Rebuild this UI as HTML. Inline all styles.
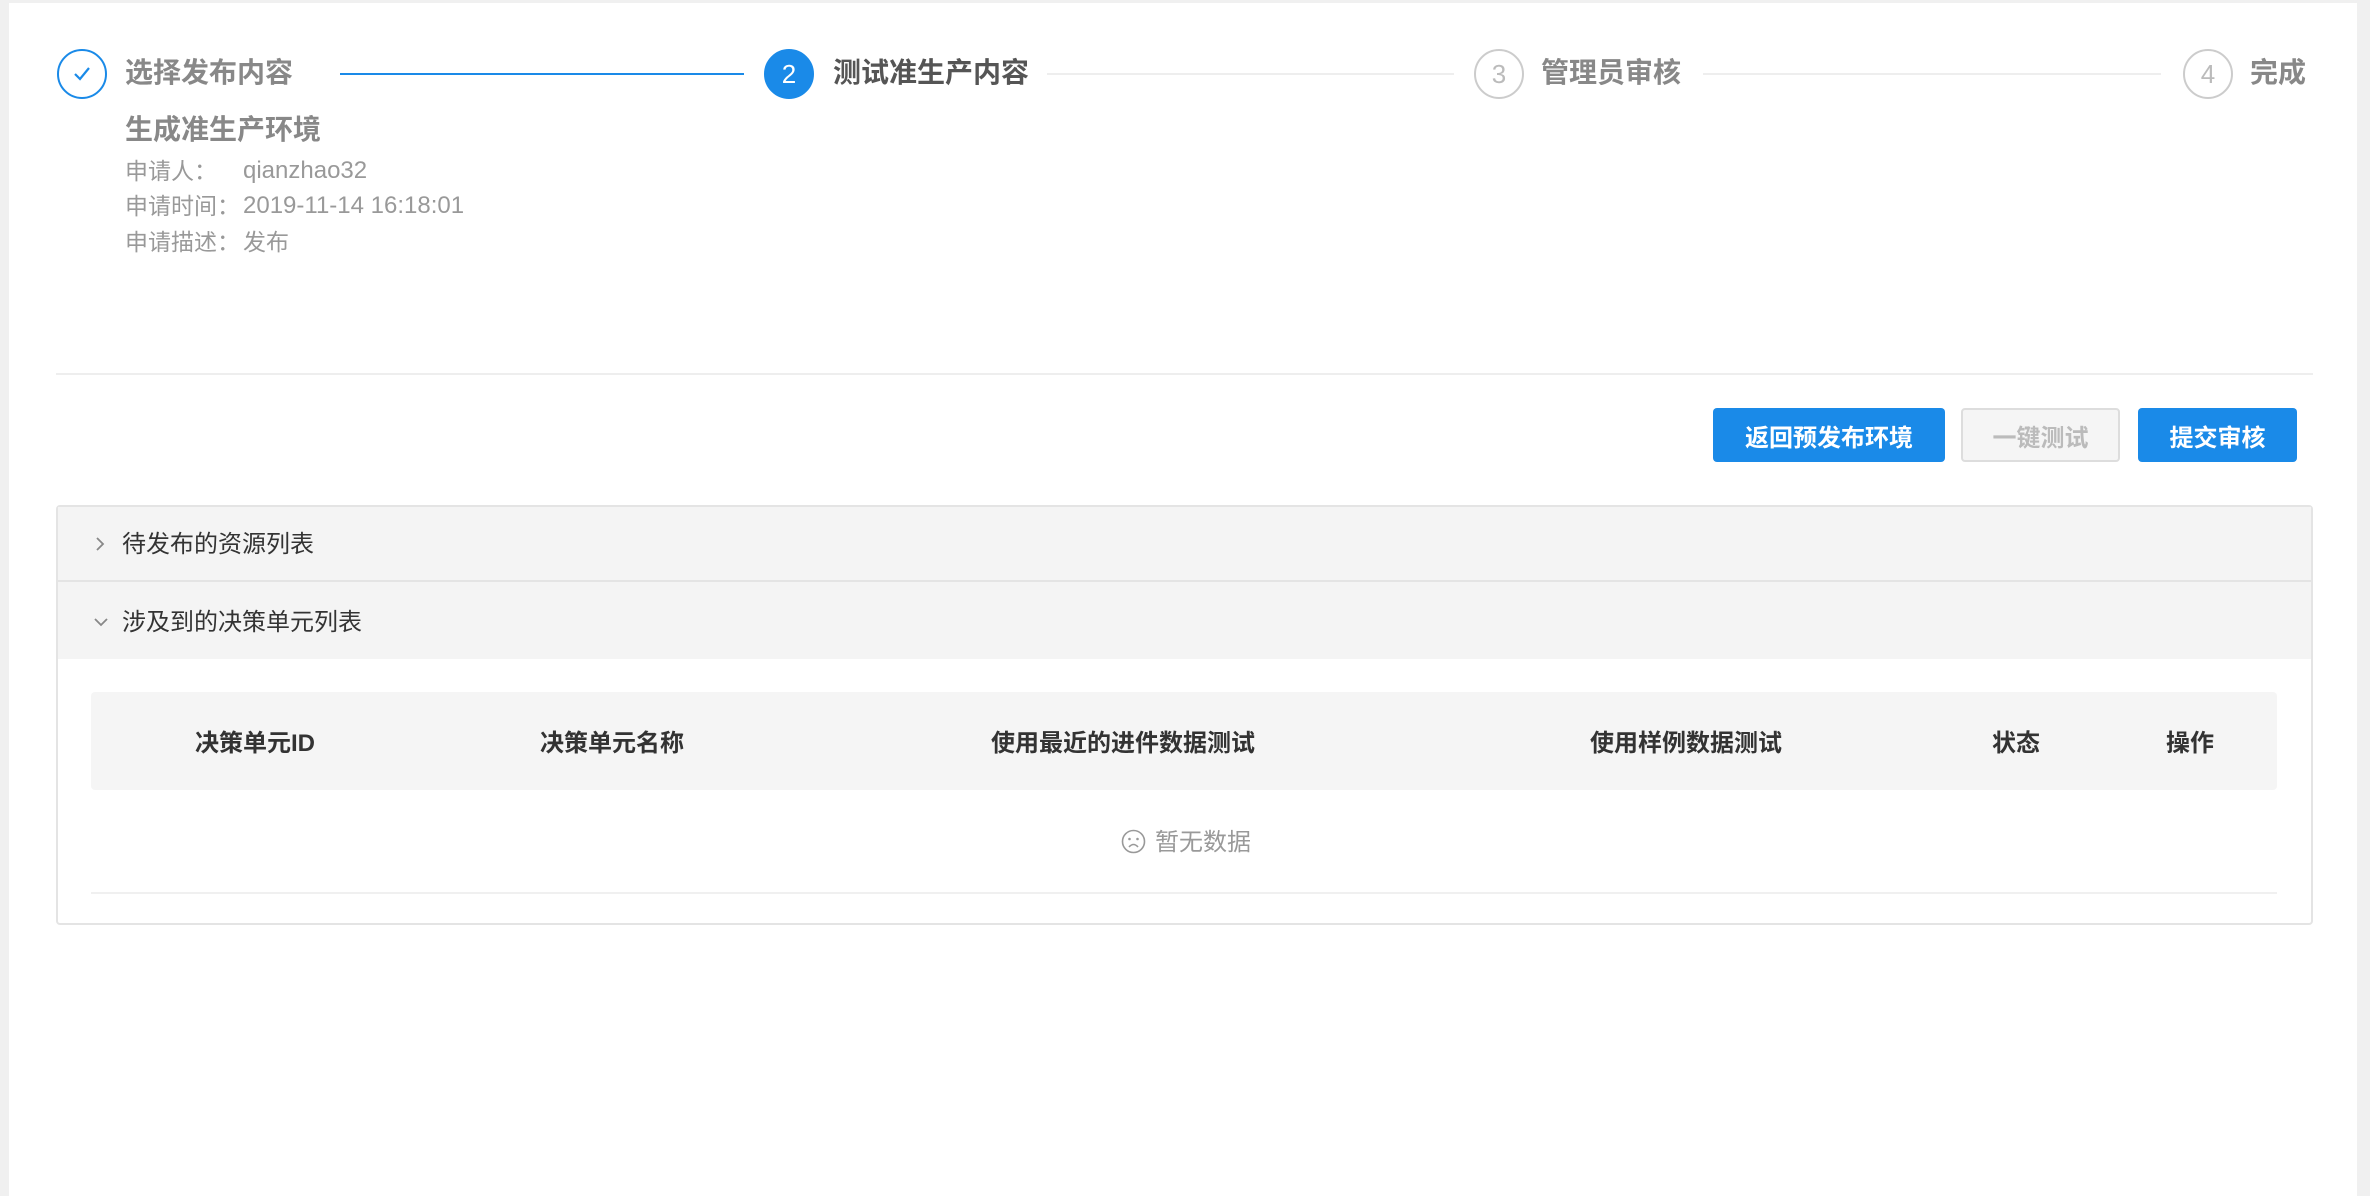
<!DOCTYPE html>
<html><head><meta charset="utf-8"><style>
*{margin:0;padding:0;box-sizing:border-box}
body{width:2370px;height:1196px;background:#f0f0f0;font-family:"Liberation Sans","Noto Sans CJK SC",sans-serif;position:relative;overflow:hidden}
.main{position:absolute;left:9px;top:3px;width:2348px;height:1193px;background:#fff}
.a{position:absolute;white-space:nowrap}
.circ{position:absolute;width:50px;height:50px;border-radius:50%;border:2px solid #ccc;color:#bbb;font-size:26px;display:flex;align-items:center;justify-content:center;top:49px}
.st{position:absolute;top:55px;font-size:28px;font-weight:bold;color:#888;line-height:36px}
.ln{position:absolute;top:73px;height:2px;background:#eee}
.info{position:absolute;left:125px;font-size:23px;color:#999;line-height:30px;white-space:nowrap}
.info span{position:absolute;left:118px;top:0;font-size:24px;white-space:nowrap}
.btn{position:absolute;top:408px;height:54px;border-radius:4px;font-size:24px;font-weight:bold;display:flex;align-items:center;justify-content:center;color:#fff;background:#1a8ae8}
.th{position:absolute;top:723px;font-size:24px;font-weight:bold;color:#333;transform:translateX(-50%);white-space:nowrap}
</style></head><body>
<div class="main"></div>
<div class="circ" style="left:57px;border-color:#1a8ae8;color:#1a8ae8"><svg width="22" height="22" viewBox="0 0 22 22"><path d="M4 11 L9 16 L18 5" fill="none" stroke="#1a8ae8" stroke-width="2.2"/></svg></div>
<div class="st" style="left:125px">选择发布内容</div>
<div class="ln" style="left:340px;width:404px;background:#1a8ae8"></div>
<div class="circ" style="left:764px;border-color:#1a8ae8;background:#1a8ae8;color:#fff">2</div>
<div class="st" style="left:833px;color:#555">测试准生产内容</div>
<div class="ln" style="left:1047px;width:407px"></div>
<div class="circ" style="left:1474px">3</div>
<div class="st" style="left:1541px">管理员审核</div>
<div class="ln" style="left:1703px;width:458px"></div>
<div class="circ" style="left:2183px">4</div>
<div class="st" style="left:2250px">完成</div>

<div class="a" style="left:125px;top:108px;font-size:28px;font-weight:bold;color:#888">生成准生产环境</div>
<div class="info" style="top:156px">申请人：<span>qianzhao32</span></div>
<div class="info" style="top:191px">申请时间：<span>2019-11-14 16:18:01</span></div>
<div class="info" style="top:227px">申请描述：<span style="font-size:23px">发布</span></div>

<div class="a" style="left:56px;top:373px;width:2257px;height:2px;background:#eee"></div>

<div class="btn" style="left:1713px;width:232px">返回预发布环境</div>
<div class="btn" style="left:1961px;width:159px;background:#f5f5f5;border:2px solid #ddd;color:#bbb">一键测试</div>
<div class="btn" style="left:2138px;width:159px">提交审核</div>

<div class="a" style="left:56px;top:505px;width:2257px;height:420px;border:2px solid #e4e4e4;border-radius:4px;background:#fff"></div>
<div class="a" style="left:58px;top:507px;width:2253px;height:75px;background:#f4f4f4;border-bottom:2px solid #e4e4e4"></div>
<div class="a" style="left:58px;top:582px;width:2253px;height:77px;background:#f4f4f4"></div>
<svg class="a" style="left:94px;top:536px" width="12" height="16" viewBox="0 0 12 16"><path d="M3 2 L9 8 L3 14" fill="none" stroke="#888" stroke-width="1.8"/></svg>
<div class="a" style="left:122px;top:524px;font-size:24px;color:#333">待发布的资源列表</div>
<svg class="a" style="left:93px;top:616px" width="16" height="12" viewBox="0 0 16 12"><path d="M2 3 L8 9 L14 3" fill="none" stroke="#888" stroke-width="1.8"/></svg>
<div class="a" style="left:122px;top:602px;font-size:24px;color:#333">涉及到的决策单元列表</div>

<div class="a" style="left:91px;top:692px;width:2186px;height:98px;background:#f5f5f5;border-radius:4px"></div>
<div class="th" style="left:255px">决策单元ID</div>
<div class="th" style="left:612px">决策单元名称</div>
<div class="th" style="left:1123px">使用最近的进件数据测试</div>
<div class="th" style="left:1686px">使用样例数据测试</div>
<div class="th" style="left:2016px">状态</div>
<div class="th" style="left:2190px">操作</div>

<svg class="a" style="left:1121px;top:829px" width="25" height="25" viewBox="0 0 25 25"><circle cx="12.5" cy="12.5" r="11" fill="none" stroke="#999" stroke-width="1.6"/><circle cx="8.5" cy="10" r="1.3" fill="#999"/><circle cx="16.5" cy="10" r="1.3" fill="#999"/><path d="M8 18 Q12.5 13 17 18" fill="none" stroke="#999" stroke-width="1.6"/></svg>
<div class="a" style="left:1155px;top:822px;font-size:24px;color:#999">暂无数据</div>
<div class="a" style="left:91px;top:892px;width:2186px;height:2px;background:#f0f0f0"></div>
</body></html>
